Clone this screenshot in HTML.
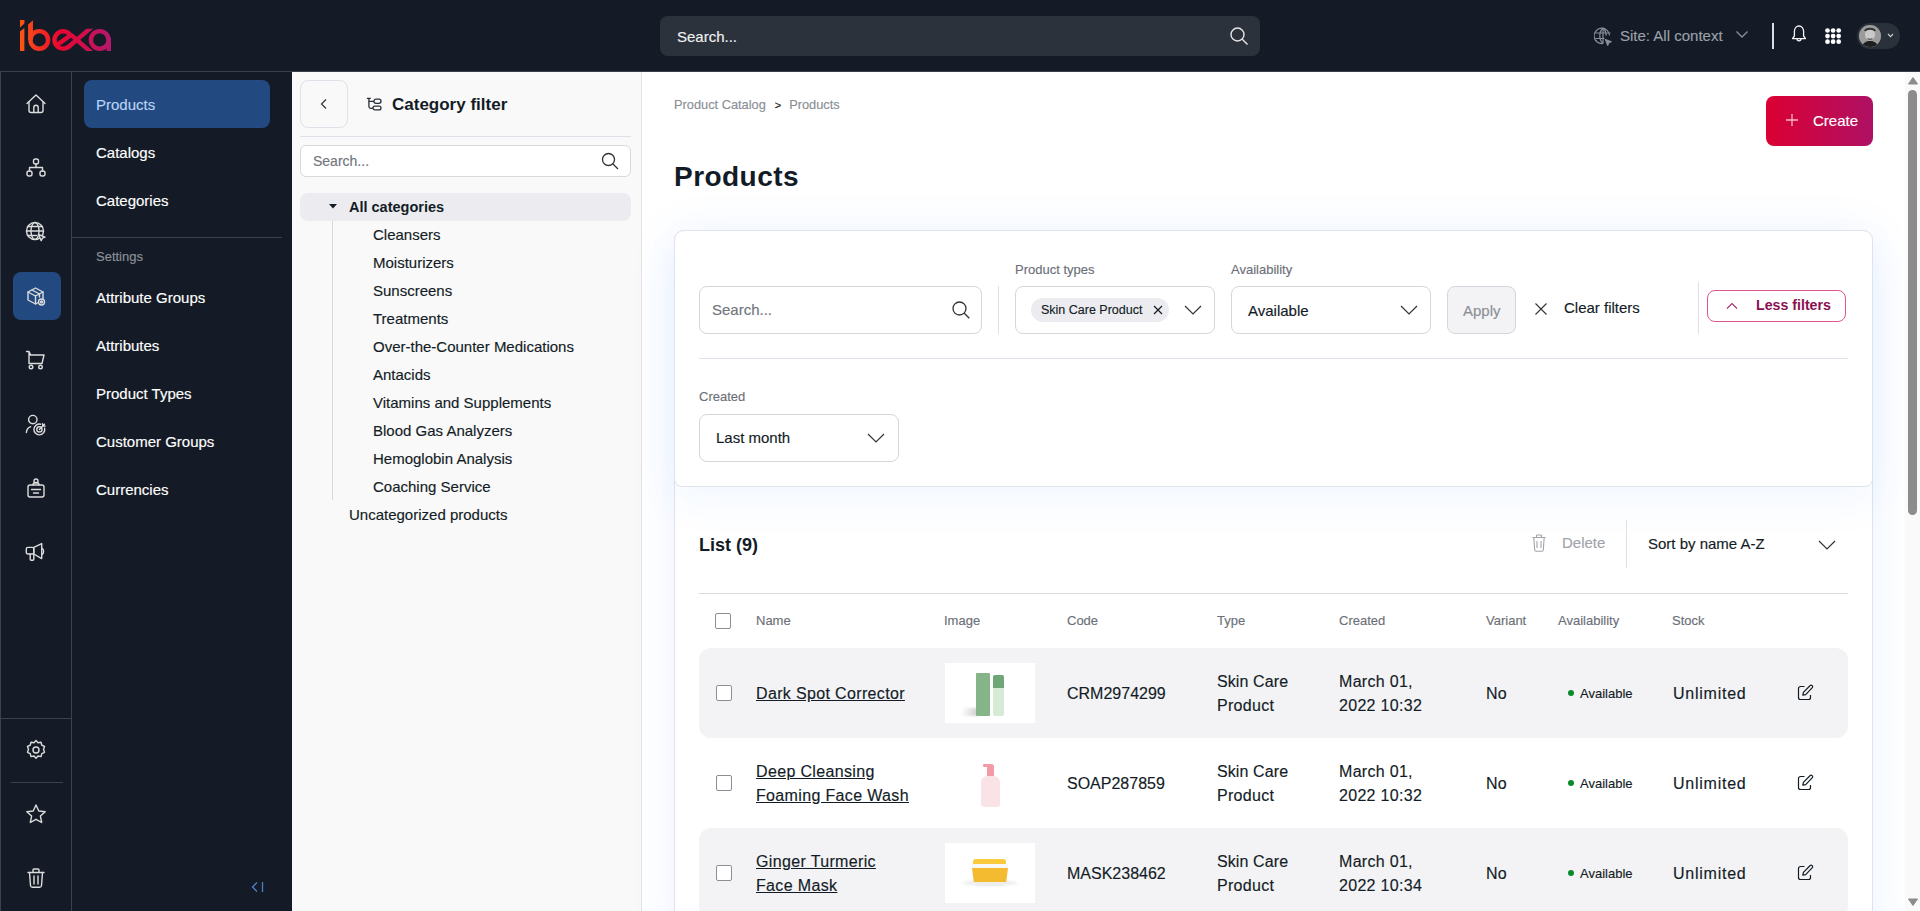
<!DOCTYPE html>
<html><head><meta charset="utf-8">
<style>
*{box-sizing:border-box;margin:0;padding:0}
html,body{width:1920px;height:911px;overflow:hidden;background:#fff;font-family:"Liberation Sans",sans-serif;color:#131c26}
.abs{position:absolute}
#hdr{position:absolute;left:0;top:0;width:1920px;height:72px;background:#141b26;border-bottom:1px solid #3a414c}
#rail{position:absolute;left:0;top:72px;width:72px;height:839px;background:#141b26;border-right:1px solid #3a414c;border-left:1px solid #3a414c}
#side{position:absolute;left:72px;top:72px;width:220px;height:839px;background:#141b26}
#cat{position:absolute;left:292px;top:72px;width:350px;height:839px;background:#f9f9f9;border-right:1px solid #e3e3e8}
#main{position:absolute;left:642px;top:72px;width:1263px;height:839px;background:#fff}
#sb{position:absolute;left:1905px;top:72px;width:15px;height:839px;background:#fafafa}
.t{position:absolute;white-space:nowrap;-webkit-text-stroke:.15px currentColor}
</style></head><body>
<div id="hdr"></div>
<svg class="abs" style="left:0;top:0" width="130" height="72" viewBox="0 0 130 72">
<defs><linearGradient id="lg" x1="18" y1="0" x2="112" y2="0" gradientUnits="userSpaceOnUse">
<stop offset="0" stop-color="#ff5a12"/><stop offset="0.45" stop-color="#ea0530"/><stop offset="1" stop-color="#b3196f"/></linearGradient></defs>
<clipPath id="lc"><rect x="0" y="28.8" width="130" height="22.3"/></clipPath>
<polygon fill="url(#lg)" points="20,20 24.4,20 24.4,23.6 20,27.4"/>
<polygon fill="url(#lg)" points="20,31.6 24.4,27.9 24.4,51 20,51"/>
<polygon fill="url(#lg)" points="28.1,24.6 33,20.2 33,40 28.1,40"/>
<g fill="none" stroke="url(#lg)" stroke-width="4.4">
<circle cx="39.3" cy="39.9" r="8.8"/>
<path d="M57.6 44.6 L71.3 34.8"/>
<path d="M70.5 35.2 A8.7 8.7 0 1 0 69.9 45.5"/>
<g clip-path="url(#lc)"><path d="M69 46.5 L92 26.8 M71 34.8 L92.5 53.5"/></g>
<circle cx="99.7" cy="39.9" r="8.8"/><path d="M108.8 38v13"/>
</g></svg>
<div class="abs" style="left:660px;top:16px;width:600px;height:40px;border-radius:8px;background:#2c323c"></div>
<div class="t" style="left:677px;top:29.0px;font-size:15px;line-height:15px;color:#eef0f2;font-weight:400;">Search...</div>
<svg class="abs" style="left:1229px;top:26px" width="20" height="20" viewBox="0 0 20 20" fill="none" stroke="#e6e6e6" stroke-width="1.4"><circle cx="8.5" cy="8.5" r="6.5"/><path d="M13.3 13.3L18.5 18.5"/></svg>
<svg class="abs" style="left:1594px;top:27px" width="20" height="20" viewBox="0 0 20 20" fill="none" stroke="#8a8f98" stroke-width="1.2" stroke-linejoin="round"><path d="M15.5 8.5A7.7 7.7 0 1 0 9 16.5"/><path d="M9 1c-2.2 2-3.2 4.7-3.2 7.7S6.8 14.5 9 16.5M9 1c2.2 2 3.2 4.7 3.2 7.7"/><path d="M1.5 6h15M1.5 11.5h9M9 1v15.5"/><path d="M11.5 12.5l5.8 2.2-2.6 1-1 2.6z" fill="#8a8f98"/></svg>
<div class="t" style="left:1620px;top:27.5px;font-size:15px;line-height:15px;color:#9ba0a8;font-weight:400;">Site: All context</div>
<svg class="abs" style="left:1735px;top:29px" width="14" height="10" viewBox="0 0 14 10" fill="none" stroke="#8a9099" stroke-width="1.3"><path d="M1.5 2.5L7 8l5.5-5.5"/></svg>
<div class="abs" style="left:1772px;top:23px;width:1.5px;height:26px;background:#dcdce4"></div>
<svg class="abs" style="left:1790px;top:24px" width="18" height="20" viewBox="0 0 18 20" fill="none" stroke="#f2f2f2" stroke-width="1.3" stroke-linejoin="round"><path d="M9 2c-2.7 0-4.6 2.3-4.6 5.5v4.5L2.5 14.6h13L13.6 12V7.5C13.6 4.3 11.7 2 9 2z"/><path d="M7 14.8a2 2 0 004 0"/></svg>
<svg class="abs" style="left:1825px;top:28px" width="17" height="17" viewBox="0 0 17 17" fill="#ffffff"><circle cx="2.5" cy="2.5" r="2.35"/><circle cx="2.5" cy="8.1" r="2.35"/><circle cx="2.5" cy="13.7" r="2.35"/><circle cx="8.1" cy="2.5" r="2.35"/><circle cx="8.1" cy="8.1" r="2.35"/><circle cx="8.1" cy="13.7" r="2.35"/><circle cx="13.7" cy="2.5" r="2.35"/><circle cx="13.7" cy="8.1" r="2.35"/><circle cx="13.7" cy="13.7" r="2.35"/></svg>
<div class="abs" style="left:1857px;top:23px;width:43px;height:26px;border-radius:13px;background:#2a313b"></div>
<svg class="abs" style="left:1859px;top:25px" width="22" height="22" viewBox="0 0 22 22"><defs><clipPath id="av"><circle cx="11" cy="11" r="11"/></clipPath></defs><g clip-path="url(#av)"><rect width="22" height="22" fill="#8e8e8e"/><rect x="0" y="0" width="22" height="22" fill="#a8a8a8" opacity=".5"/><ellipse cx="11" cy="9.5" rx="5" ry="6" fill="#c9c9c9"/><path d="M6 6c1-3 9-3 10 0" stroke="#333" stroke-width="2" fill="none"/><path d="M8.5 13.5c1.5 1 3.5 1 5 0" stroke="#555" stroke-width="1.2" fill="none"/><path d="M2 24c1-6 5-8 9-8s8 2 9 8z" fill="#1e1e1e"/></g></svg>
<svg class="abs" style="left:1887px;top:33px" width="7" height="5" viewBox="0 0 7 5" fill="none" stroke="#d0d0d0" stroke-width="1.1"><path d="M1 1L3.5 3.6 6 1"/></svg>
<div id="rail"></div>
<div class="abs" style="left:13px;top:272px;width:48px;height:48px;border-radius:8px;background:#224a80"></div>
<div class="abs" style="left:1px;top:718px;width:70px;height:1px;background:#3a414c"></div>
<div class="abs" style="left:11px;top:782px;width:52px;height:1px;background:#3a414c"></div>
<svg class="abs" style="left:24px;top:92px" width="24" height="24" viewBox="0 0 24 24" fill="none" stroke="#dcdcdc" stroke-width="1.4" stroke-linecap="round" stroke-linejoin="round"><path d="M3 11.5L12 3l9 8.5"/><path d="M5 10v8.5a2 2 0 002 2h10a2 2 0 002-2V10"/><path d="M9.8 20.5v-5a2.2 2.2 0 014.4 0v5"/></svg>
<svg class="abs" style="left:24px;top:156px" width="24" height="24" viewBox="0 0 24 24" fill="none" stroke="#dcdcdc" stroke-width="1.4" stroke-linecap="round" stroke-linejoin="round"><rect x="9.5" y="3" width="5" height="5" rx="2"/><rect x="3" y="15" width="5" height="5" rx="2"/><rect x="16" y="15" width="5" height="5" rx="2"/><path d="M12 8v3.5M5.5 15v-3.5h13V15"/></svg>
<svg class="abs" style="left:24px;top:220px" width="24" height="24" viewBox="0 0 24 24" fill="none" stroke="#dcdcdc" stroke-width="1.4" stroke-linecap="round" stroke-linejoin="round"><circle cx="11" cy="11" r="8.5"/><ellipse cx="11" cy="11" rx="4" ry="8.5"/><path d="M2.5 11h17M3.5 6.5h15M3.5 15.5h9"/><path d="M14.5 14.5l6.5 2.6-2.6 1-1.2 2.6z" fill="#141b26"/></svg>
<svg class="abs" style="left:24px;top:284px" width="24" height="24" viewBox="0 0 24 24" fill="none" stroke="#dcdcdc" stroke-width="1.4" stroke-linecap="round" stroke-linejoin="round"><path d="M4 8l7.5-4 7.5 4v8l-7.5 4-7.5-4z"/><path d="M4 8l7.5 4 7.5-4M11.5 12v8M8 6l7.5 4v3"/><circle cx="17.5" cy="18" r="3" fill="#224a80"/><circle cx="17.5" cy="18" r="1"/></svg>
<svg class="abs" style="left:24px;top:348px" width="24" height="24" viewBox="0 0 24 24" fill="none" stroke="#dcdcdc" stroke-width="1.4" stroke-linecap="round" stroke-linejoin="round"><path d="M2.5 3.5h2.5l1.5 3 M5 3.5v12h13l2-8.5H6"/><circle cx="7" cy="19" r="1.8"/><circle cx="16.5" cy="19" r="1.8"/></svg>
<svg class="abs" style="left:24px;top:412px" width="24" height="24" viewBox="0 0 24 24" fill="none" stroke="#dcdcdc" stroke-width="1.4" stroke-linecap="round" stroke-linejoin="round"><circle cx="8.8" cy="7.6" r="4.2"/><path d="M2.4 20.5a6.5 6.5 0 0 1 4.3-5.8"/><path d="M20.6 16.2a5.4 5.4 0 1 1-4-4"/><circle cx="15.4" cy="17.4" r="2.6"/><path d="M15.4 17.4L20.5 12.3M18.6 11.6l.1 2.4 2.4.1"/></svg>
<svg class="abs" style="left:24px;top:476px" width="24" height="24" viewBox="0 0 24 24" fill="none" stroke="#dcdcdc" stroke-width="1.4" stroke-linecap="round" stroke-linejoin="round"><rect x="4" y="9" width="16" height="12" rx="2"/><circle cx="12" cy="5" r="2"/><path d="M9 9c0-2 1.5-2.5 3-2.5s3 .5 3 2.5M7.5 13.5h9M9.5 17h5"/></svg>
<svg class="abs" style="left:24px;top:540px" width="24" height="24" viewBox="0 0 24 24" fill="none" stroke="#dcdcdc" stroke-width="1.4" stroke-linecap="round" stroke-linejoin="round"><rect x="2.3" y="7.4" width="7.5" height="6.6" rx="1.5"/><path d="M9.8 7.4L17.7 3.6V18.6L9.8 14z"/><path d="M17.7 8.2a3.2 3.6 0 0 1 0 6.6"/><path d="M6.2 14v5.2a1 1 0 0 0 1 1h1.6a1 1 0 0 0 1-1V14"/></svg>
<svg class="abs" style="left:24px;top:738px" width="24" height="24" viewBox="0 0 24 24" fill="none" stroke="#dcdcdc" stroke-width="1.4" stroke-linecap="round" stroke-linejoin="round"><circle cx="12" cy="12" r="3"/><path d="M12 2.5l2 2.3 3-.6.8 3 2.7 1.3-1 2.9 1 2.9-2.7 1.3-.8 3-3-.6-2 2.3-2-2.3-3 .6-.8-3-2.7-1.3 1-2.9-1-2.9 2.7-1.3.8-3 3 .6z"/></svg>
<svg class="abs" style="left:24px;top:802px" width="24" height="24" viewBox="0 0 24 24" fill="none" stroke="#dcdcdc" stroke-width="1.4" stroke-linecap="round" stroke-linejoin="round"><path d="M12 3l2.8 6 6.4.7-4.8 4.4 1.3 6.4L12 17.3 6.3 20.5l1.3-6.4L2.8 9.7 9.2 9z"/></svg>
<svg class="abs" style="left:24px;top:866px" width="24" height="24" viewBox="0 0 24 24" fill="none" stroke="#dcdcdc" stroke-width="1.4" stroke-linecap="round" stroke-linejoin="round"><path d="M4 6.5h16M9 6.5V4a1 1 0 011-1h4a1 1 0 011 1v2.5"/><path d="M5.5 6.5l1 13a2 2 0 002 1.8h7a2 2 0 002-1.8l1-13M10 10v8M14 10v8"/></svg>
<div id="side"></div>
<div class="abs" style="left:84px;top:80px;width:186px;height:48px;border-radius:8px;background:#224a80"></div>
<div class="t" style="left:96px;top:96.5px;font-size:15px;line-height:15px;color:#b9d3f7;font-weight:400;">Products</div>
<div class="t" style="left:96px;top:144.5px;font-size:15px;line-height:15px;color:#ffffff;font-weight:400;">Catalogs</div>
<div class="t" style="left:96px;top:192.5px;font-size:15px;line-height:15px;color:#ffffff;font-weight:400;">Categories</div>
<div class="t" style="left:96px;top:289.5px;font-size:15px;line-height:15px;color:#ffffff;font-weight:400;">Attribute Groups</div>
<div class="t" style="left:96px;top:337.5px;font-size:15px;line-height:15px;color:#ffffff;font-weight:400;">Attributes</div>
<div class="t" style="left:96px;top:385.5px;font-size:15px;line-height:15px;color:#ffffff;font-weight:400;">Product Types</div>
<div class="t" style="left:96px;top:433.5px;font-size:15px;line-height:15px;color:#ffffff;font-weight:400;">Customer Groups</div>
<div class="t" style="left:96px;top:481.5px;font-size:15px;line-height:15px;color:#ffffff;font-weight:400;">Currencies</div>
<div class="abs" style="left:72px;top:237px;width:210px;height:1px;background:#3a414c"></div>
<div class="t" style="left:96px;top:249.5px;font-size:13px;line-height:13px;color:#8c9199;font-weight:400;">Settings</div>
<svg class="abs" style="left:250px;top:879px" width="16" height="16" viewBox="0 0 16 16" fill="none" stroke="#4a7ec7" stroke-width="1.3"><path d="M7 3.5L2.5 8 7 12.5M12.5 3v10"/></svg>
<div id="cat"></div>
<div class="abs" style="left:300px;top:80px;width:48px;height:48px;border-radius:8px;border:1px solid #e0e0e8;background:#f9f9f9"></div>
<svg class="abs" style="left:316px;top:96px" width="16" height="16" viewBox="0 0 16 16" fill="none" stroke="#333" stroke-width="1.2"><path d="M10 3.5L5.5 8l4.5 4.5"/></svg>
<svg class="abs" style="left:365px;top:95px" width="18" height="18" viewBox="0 0 18 18" fill="none" stroke="#2a3039" stroke-width="1.3"><path d="M1.9 3.35H5.8M3.9 3.4V11.6q0 1.8 1.8 1.8H8M3.9 6.3H8.9"/><rect x="8.9" y="4.2" width="7.1" height="4.2" rx="2.1"/><rect x="8" y="11.1" width="8" height="3.8" rx="1.9"/></svg>
<div class="t" style="left:392px;top:95.5px;font-size:17px;line-height:17px;color:#131c26;font-weight:700;-webkit-text-stroke:0;">Category filter</div>
<div class="abs" style="left:300px;top:136px;width:331px;height:1px;background:#e0e0e8"></div>
<div class="abs" style="left:300px;top:145px;width:331px;height:32px;border-radius:6px;border:1px solid #d8d8de;background:#fff"></div>
<div class="t" style="left:313px;top:154.0px;font-size:14px;line-height:14px;color:#71757c;font-weight:400;">Search...</div>
<svg class="abs" style="left:600px;top:151px" width="20" height="20" viewBox="0 0 20 20" fill="none" stroke="#333" stroke-width="1.3"><circle cx="8.5" cy="8.5" r="6"/><path d="M13 13l5 5"/></svg>
<div class="abs" style="left:300px;top:193px;width:331px;height:28px;border-radius:8px;background:#ececf0"></div>
<svg class="abs" style="left:327px;top:200px" width="12" height="12" viewBox="0 0 12 12" fill="#131c26"><path d="M2 4h8L6 8.5z"/></svg>
<div class="t" style="left:349px;top:199.75px;font-size:14.5px;line-height:14.5px;color:#131c26;font-weight:700;-webkit-text-stroke:0;">All categories</div>
<div class="abs" style="left:332px;top:221px;width:1px;height:279px;background:#d8d8de"></div>
<div class="t" style="left:373px;top:226.5px;font-size:15px;line-height:15px;color:#131c26;font-weight:400;">Cleansers</div>
<div class="t" style="left:373px;top:254.5px;font-size:15px;line-height:15px;color:#131c26;font-weight:400;">Moisturizers</div>
<div class="t" style="left:373px;top:282.5px;font-size:15px;line-height:15px;color:#131c26;font-weight:400;">Sunscreens</div>
<div class="t" style="left:373px;top:310.5px;font-size:15px;line-height:15px;color:#131c26;font-weight:400;">Treatments</div>
<div class="t" style="left:373px;top:338.5px;font-size:15px;line-height:15px;color:#131c26;font-weight:400;">Over-the-Counter Medications</div>
<div class="t" style="left:373px;top:366.5px;font-size:15px;line-height:15px;color:#131c26;font-weight:400;">Antacids</div>
<div class="t" style="left:373px;top:394.5px;font-size:15px;line-height:15px;color:#131c26;font-weight:400;">Vitamins and Supplements</div>
<div class="t" style="left:373px;top:422.5px;font-size:15px;line-height:15px;color:#131c26;font-weight:400;">Blood Gas Analyzers</div>
<div class="t" style="left:373px;top:450.5px;font-size:15px;line-height:15px;color:#131c26;font-weight:400;">Hemoglobin Analysis</div>
<div class="t" style="left:373px;top:478.5px;font-size:15px;line-height:15px;color:#131c26;font-weight:400;">Coaching Service</div>
<div class="t" style="left:349px;top:506.5px;font-size:15px;line-height:15px;color:#131c26;font-weight:400;">Uncategorized products</div>
<div id="main"></div>
<div class="t" style="left:674px;top:98.6px;font-size:12.8px;line-height:12.8px;color:#8a8f96;font-weight:400;">Product Catalog<span style="color:#131c26;margin:0 8px 0 9px;font-size:11px">&gt;</span>Products</div>
<div class="t" style="left:674px;top:163.0px;font-size:28px;line-height:28px;color:#131c26;font-weight:700;-webkit-text-stroke:0;letter-spacing:.45px">Products</div>
<div class="abs" style="left:1766px;top:96px;width:107px;height:50px;border-radius:8px;background:linear-gradient(90deg,#db0032,#ae1164)"></div>
<svg class="abs" style="left:1784px;top:112px" width="16" height="16" viewBox="0 0 16 16" fill="none" stroke="#f6b8c8" stroke-width="1.3"><path d="M8 2v12M2 8h12"/></svg>
<div class="t" style="left:1813px;top:112.5px;font-size:15px;line-height:15px;color:#ffffff;font-weight:400;">Create</div>
<div class="abs" style="left:674px;top:230px;width:1199px;height:720px;border-radius:10px;border:1px solid #e0e3eb;background:#fff;box-shadow:0 4px 48px rgba(40,120,255,.09)"></div>
<div class="abs" style="left:674px;top:230px;width:1199px;height:257px;border-radius:10px 10px 8px 8px;border:1px solid #e0e3eb;background:#fff;box-shadow:0 16px 40px rgba(40,120,255,.06)"></div>
<div class="abs" style="left:699px;top:286px;width:283px;height:48px;border-radius:8px;border:1px solid #d5d5dc;background:#fff"></div>
<div class="t" style="left:712px;top:302.0px;font-size:15px;line-height:15px;color:#71757c;font-weight:400;">Search...</div>
<svg class="abs" style="left:950px;top:299px" width="22" height="22" viewBox="0 0 22 22" fill="none" stroke="#333" stroke-width="1.3"><circle cx="9.5" cy="9.5" r="6.5"/><path d="M14.3 14.3l5 5"/></svg>
<div class="abs" style="left:998px;top:286px;width:1px;height:48px;background:#e0e0e8"></div>
<div class="t" style="left:1015px;top:262.5px;font-size:13px;line-height:13px;color:#6c7078;font-weight:400;">Product types</div>
<div class="abs" style="left:1015px;top:286px;width:200px;height:48px;border-radius:8px;border:1px solid #d5d5dc;background:#fff"></div>
<div class="abs" style="left:1031px;top:298px;width:138px;height:24px;border-radius:12px;background:#ececf0"></div>
<div class="t" style="left:1041px;top:303.75px;font-size:12.5px;line-height:12.5px;color:#131c26;font-weight:400;">Skin Care Product</div>
<svg class="abs" style="left:1151px;top:303px" width="14" height="14" viewBox="0 0 14 14" fill="none" stroke="#131c26" stroke-width="1.2"><path d="M3 3l8 8M11 3l-8 8"/></svg>
<svg class="abs" style="left:1183px;top:303px" width="20" height="14" viewBox="0 0 20 14" fill="none" stroke="#333" stroke-width="1.2"><path d="M2 3l8 8 8-8"/></svg>
<div class="t" style="left:1231px;top:262.5px;font-size:13px;line-height:13px;color:#6c7078;font-weight:400;">Availability</div>
<div class="abs" style="left:1231px;top:286px;width:200px;height:48px;border-radius:8px;border:1px solid #d5d5dc;background:#fff"></div>
<div class="t" style="left:1248px;top:302.5px;font-size:15px;line-height:15px;color:#131c26;font-weight:400;">Available</div>
<svg class="abs" style="left:1399px;top:303px" width="20" height="14" viewBox="0 0 20 14" fill="none" stroke="#333" stroke-width="1.2"><path d="M2 3l8 8 8-8"/></svg>
<div class="abs" style="left:1447px;top:286px;width:69px;height:48px;border-radius:8px;border:1px solid #d5d5dc;background:#f3f3f5"></div>
<div class="t" style="left:1463px;top:302.5px;font-size:15px;line-height:15px;color:#8a8f96;font-weight:400;">Apply</div>
<svg class="abs" style="left:1534px;top:302px" width="14" height="14" viewBox="0 0 14 14" fill="none" stroke="#333" stroke-width="1.1"><path d="M1.5 1.5l11 11M12.5 1.5l-11 11"/></svg>
<div class="t" style="left:1564px;top:300.0px;font-size:15px;line-height:15px;color:#131c26;font-weight:400;">Clear filters</div>
<div class="abs" style="left:1698px;top:282px;width:1px;height:52px;background:#e0e0e8"></div>
<div class="abs" style="left:1707px;top:290px;width:139px;height:32px;border-radius:8px;border:1px solid #d9588f;background:#fff"></div>
<svg class="abs" style="left:1725px;top:301px" width="14" height="10" viewBox="0 0 14 10" fill="none" stroke="#a0306c" stroke-width="1.1"><path d="M2 7.5L7 2.5l5 5"/></svg>
<div class="t" style="left:1756px;top:298.4px;font-size:14.2px;line-height:14.2px;color:#8b0e52;font-weight:700;-webkit-text-stroke:0;">Less filters</div>
<div class="abs" style="left:699px;top:358px;width:1149px;height:1px;background:#e0e0e8"></div>
<div class="t" style="left:699px;top:389.5px;font-size:13px;line-height:13px;color:#6c7078;font-weight:400;">Created</div>
<div class="abs" style="left:699px;top:414px;width:200px;height:48px;border-radius:8px;border:1px solid #d5d5dc;background:#fff"></div>
<div class="t" style="left:716px;top:430.0px;font-size:15px;line-height:15px;color:#131c26;font-weight:400;">Last month</div>
<svg class="abs" style="left:866px;top:431px" width="20" height="14" viewBox="0 0 20 14" fill="none" stroke="#333" stroke-width="1.2"><path d="M2 3l8 8 8-8"/></svg>
<div class="t" style="left:699px;top:535.5px;font-size:18px;line-height:18px;color:#131c26;font-weight:700;-webkit-text-stroke:0;">List (9)</div>
<svg class="abs" style="left:1530px;top:533px" width="18" height="20" viewBox="0 0 18 20" fill="none" stroke="#a0a4aa" stroke-width="1.1"><path d="M2.5 4.5h13M6.5 4.5V2.8c0-.4.3-.8.8-.8h3.4c.5 0 .8.4.8.8v1.7M3.8 4.5l.9 12.5c.1.8.7 1.3 1.4 1.3h5.8c.7 0 1.3-.5 1.4-1.3l.9-12.5M7 8v7M11 8v7"/></svg>
<div class="t" style="left:1562px;top:535.0px;font-size:15px;line-height:15px;color:#a0a4aa;font-weight:400;">Delete</div>
<div class="abs" style="left:1626px;top:520px;width:1px;height:48px;background:#e0e0e8"></div>
<div class="t" style="left:1648px;top:535.5px;font-size:15px;line-height:15px;color:#131c26;font-weight:400;">Sort by name A-Z</div>
<svg class="abs" style="left:1817px;top:538px" width="20" height="14" viewBox="0 0 20 14" fill="none" stroke="#333" stroke-width="1.2"><path d="M2 3l8 8 8-8"/></svg>
<div class="abs" style="left:699px;top:593px;width:1149px;height:1px;background:#d8d8de"></div>
<div class="abs" style="left:715px;top:613px;width:16px;height:16px;border-radius:2px;border:1px solid #8a8f96;background:#fff"></div>
<div class="t" style="left:756px;top:613.5px;font-size:13px;line-height:13px;color:#6c7078;font-weight:400;">Name</div>
<div class="t" style="left:944px;top:613.5px;font-size:13px;line-height:13px;color:#6c7078;font-weight:400;">Image</div>
<div class="t" style="left:1067px;top:613.5px;font-size:13px;line-height:13px;color:#6c7078;font-weight:400;">Code</div>
<div class="t" style="left:1217px;top:613.5px;font-size:13px;line-height:13px;color:#6c7078;font-weight:400;">Type</div>
<div class="t" style="left:1339px;top:613.5px;font-size:13px;line-height:13px;color:#6c7078;font-weight:400;">Created</div>
<div class="t" style="left:1486px;top:613.5px;font-size:13px;line-height:13px;color:#6c7078;font-weight:400;">Variant</div>
<div class="t" style="left:1558px;top:613.5px;font-size:13px;line-height:13px;color:#6c7078;font-weight:400;">Availability</div>
<div class="t" style="left:1672px;top:613.5px;font-size:13px;line-height:13px;color:#6c7078;font-weight:400;">Stock</div>
<div class="abs" style="left:699px;top:648px;width:1149px;height:90px;border-radius:12px;background:#f3f3f5"></div>
<div class="abs" style="left:716px;top:685px;width:16px;height:16px;border-radius:2px;border:1px solid #8a8f96;background:#fff"></div>
<div class="t" style="left:756px;top:686.0px;font-size:16px;line-height:16px;color:#131c26;font-weight:400;text-decoration:underline;letter-spacing:.35px">Dark Spot Corrector</div>
<div class="abs" style="left:945px;top:663px;width:90px;height:60px;background:#fff"></div>
<div class="abs" style="left:962px;top:708px;width:16px;height:8px;background:linear-gradient(100deg,rgba(255,255,255,0) 0,rgba(170,170,170,.6) 100%);filter:blur(1px)"></div>
<div class="abs" style="left:976px;top:673px;width:14px;height:43px;border-radius:1px;background:#84b487"></div>
<div class="abs" style="left:993px;top:675px;width:11px;height:41px;border-radius:2px;background:#d5ebd5"></div>
<div class="abs" style="left:993px;top:675px;width:11px;height:13px;border-radius:2px 2px 0 0;background:#6fa676"></div>
<div class="t" style="left:1067px;top:686.0px;font-size:16px;line-height:16px;color:#131c26;font-weight:400;letter-spacing:0">CRM2974299</div>
<div class="t" style="left:1217px;top:674.0px;font-size:16px;line-height:16px;color:#131c26;font-weight:400;letter-spacing:.1px">Skin Care</div>
<div class="t" style="left:1217px;top:698.0px;font-size:16px;line-height:16px;color:#131c26;font-weight:400;letter-spacing:.3px">Product</div>
<div class="t" style="left:1339px;top:674.0px;font-size:16px;line-height:16px;color:#131c26;font-weight:400;letter-spacing:.3px">March 01,</div>
<div class="t" style="left:1339px;top:698.0px;font-size:16px;line-height:16px;color:#131c26;font-weight:400;letter-spacing:.3px">2022 10:32</div>
<div class="t" style="left:1486px;top:686.0px;font-size:16px;line-height:16px;color:#131c26;font-weight:400;letter-spacing:.3px">No</div>
<div class="abs" style="left:1568px;top:690px;width:6px;height:6px;border-radius:50%;background:#0b8a2b"></div>
<div class="t" style="left:1580px;top:686.5px;font-size:13px;line-height:13px;color:#131c26;font-weight:400;">Available</div>
<div class="t" style="left:1673px;top:686.0px;font-size:16px;line-height:16px;color:#131c26;font-weight:400;letter-spacing:.75px">Unlimited</div>
<svg class="abs" style="left:1797px;top:684px" width="18" height="18" viewBox="0 0 18 18" fill="none" stroke="#131c26" stroke-width="1.2" stroke-linejoin="round"><path d="M7.5 2.5H3.5A2 2 0 0 0 1.5 4.5v9a2 2 0 0 0 2 2h8a2 2 0 0 0 2-2V11"/><path d="M5.8 11.2l.6-2.9 6.8-6.8a1.5 1.5 0 0 1 2.1 2.1L8.7 10.6z"/></svg>
<div class="abs" style="left:716px;top:775px;width:16px;height:16px;border-radius:2px;border:1px solid #8a8f96;background:#fff"></div>
<div class="t" style="left:756px;top:764.0px;font-size:16px;line-height:16px;color:#131c26;font-weight:400;text-decoration:underline;letter-spacing:.35px">Deep Cleansing</div>
<div class="t" style="left:756px;top:788.0px;font-size:16px;line-height:16px;color:#131c26;font-weight:400;text-decoration:underline;letter-spacing:.35px">Foaming Face Wash</div>
<div class="abs" style="left:983px;top:764px;width:10px;height:2.5px;border-radius:1px;background:#f29aa6"></div>
<div class="abs" style="left:987px;top:765px;width:7px;height:11px;border-radius:1px 1px 0 0;background:#f29aa6"></div>
<div class="abs" style="left:981px;top:775.5px;width:19px;height:31px;border-radius:6px 6px 3px 3px;background:#fae3e7"></div>
<div class="t" style="left:1067px;top:776.0px;font-size:16px;line-height:16px;color:#131c26;font-weight:400;letter-spacing:0">SOAP287859</div>
<div class="t" style="left:1217px;top:764.0px;font-size:16px;line-height:16px;color:#131c26;font-weight:400;letter-spacing:.1px">Skin Care</div>
<div class="t" style="left:1217px;top:788.0px;font-size:16px;line-height:16px;color:#131c26;font-weight:400;letter-spacing:.3px">Product</div>
<div class="t" style="left:1339px;top:764.0px;font-size:16px;line-height:16px;color:#131c26;font-weight:400;letter-spacing:.3px">March 01,</div>
<div class="t" style="left:1339px;top:788.0px;font-size:16px;line-height:16px;color:#131c26;font-weight:400;letter-spacing:.3px">2022 10:32</div>
<div class="t" style="left:1486px;top:776.0px;font-size:16px;line-height:16px;color:#131c26;font-weight:400;letter-spacing:.3px">No</div>
<div class="abs" style="left:1568px;top:780px;width:6px;height:6px;border-radius:50%;background:#0b8a2b"></div>
<div class="t" style="left:1580px;top:776.5px;font-size:13px;line-height:13px;color:#131c26;font-weight:400;">Available</div>
<div class="t" style="left:1673px;top:776.0px;font-size:16px;line-height:16px;color:#131c26;font-weight:400;letter-spacing:.75px">Unlimited</div>
<svg class="abs" style="left:1797px;top:774px" width="18" height="18" viewBox="0 0 18 18" fill="none" stroke="#131c26" stroke-width="1.2" stroke-linejoin="round"><path d="M7.5 2.5H3.5A2 2 0 0 0 1.5 4.5v9a2 2 0 0 0 2 2h8a2 2 0 0 0 2-2V11"/><path d="M5.8 11.2l.6-2.9 6.8-6.8a1.5 1.5 0 0 1 2.1 2.1L8.7 10.6z"/></svg>
<div class="abs" style="left:699px;top:828px;width:1149px;height:90px;border-radius:12px;background:#f3f3f5"></div>
<div class="abs" style="left:716px;top:865px;width:16px;height:16px;border-radius:2px;border:1px solid #8a8f96;background:#fff"></div>
<div class="t" style="left:756px;top:854.0px;font-size:16px;line-height:16px;color:#131c26;font-weight:400;text-decoration:underline;letter-spacing:.35px">Ginger Turmeric</div>
<div class="t" style="left:756px;top:878.0px;font-size:16px;line-height:16px;color:#131c26;font-weight:400;text-decoration:underline;letter-spacing:.35px">Face Mask</div>
<div class="abs" style="left:945px;top:843px;width:90px;height:60px;background:#fff"></div>
<div class="abs" style="left:962px;top:881px;width:56px;height:4px;border-radius:50%;background:rgba(150,150,150,.22);filter:blur(1.5px)"></div>
<div class="abs" style="left:973px;top:859px;width:33px;height:6px;border-radius:3px 3px 0 0;background:#fbc93c"></div>
<div class="abs" style="left:972px;top:864px;width:36px;height:5px;background:#f7f7f7"></div>
<div class="abs" style="left:972px;top:868px;width:36px;height:14px;clip-path:polygon(0 0,100% 0,95% 100%,5% 100%);background:#f5bb30"></div>
<div class="abs" style="left:975px;top:882px;width:30px;height:3.5px;border-radius:0 0 4px 4px;background:#ededed"></div>
<div class="t" style="left:1067px;top:866.0px;font-size:16px;line-height:16px;color:#131c26;font-weight:400;letter-spacing:0">MASK238462</div>
<div class="t" style="left:1217px;top:854.0px;font-size:16px;line-height:16px;color:#131c26;font-weight:400;letter-spacing:.1px">Skin Care</div>
<div class="t" style="left:1217px;top:878.0px;font-size:16px;line-height:16px;color:#131c26;font-weight:400;letter-spacing:.3px">Product</div>
<div class="t" style="left:1339px;top:854.0px;font-size:16px;line-height:16px;color:#131c26;font-weight:400;letter-spacing:.3px">March 01,</div>
<div class="t" style="left:1339px;top:878.0px;font-size:16px;line-height:16px;color:#131c26;font-weight:400;letter-spacing:.3px">2022 10:34</div>
<div class="t" style="left:1486px;top:866.0px;font-size:16px;line-height:16px;color:#131c26;font-weight:400;letter-spacing:.3px">No</div>
<div class="abs" style="left:1568px;top:870px;width:6px;height:6px;border-radius:50%;background:#0b8a2b"></div>
<div class="t" style="left:1580px;top:866.5px;font-size:13px;line-height:13px;color:#131c26;font-weight:400;">Available</div>
<div class="t" style="left:1673px;top:866.0px;font-size:16px;line-height:16px;color:#131c26;font-weight:400;letter-spacing:.75px">Unlimited</div>
<svg class="abs" style="left:1797px;top:864px" width="18" height="18" viewBox="0 0 18 18" fill="none" stroke="#131c26" stroke-width="1.2" stroke-linejoin="round"><path d="M7.5 2.5H3.5A2 2 0 0 0 1.5 4.5v9a2 2 0 0 0 2 2h8a2 2 0 0 0 2-2V11"/><path d="M5.8 11.2l.6-2.9 6.8-6.8a1.5 1.5 0 0 1 2.1 2.1L8.7 10.6z"/></svg>
<div id="sb"></div>
<div class="abs" style="left:1908px;top:90px;width:9px;height:425px;border-radius:5px;background:#8c8c8c"></div>
<svg class="abs" style="left:1906px;top:74px" width="14" height="12" viewBox="0 0 14 12" fill="#8c8c8c"><path d="M2.5 10h9L7 3.5z" stroke="#8c8c8c" stroke-width="1" stroke-linejoin="round"/></svg>
<svg class="abs" style="left:1906px;top:897px" width="14" height="12" viewBox="0 0 14 12" fill="#8c8c8c"><path d="M2.5 2h9L7 8.5z" stroke="#8c8c8c" stroke-width="1" stroke-linejoin="round"/></svg>
</body></html>
